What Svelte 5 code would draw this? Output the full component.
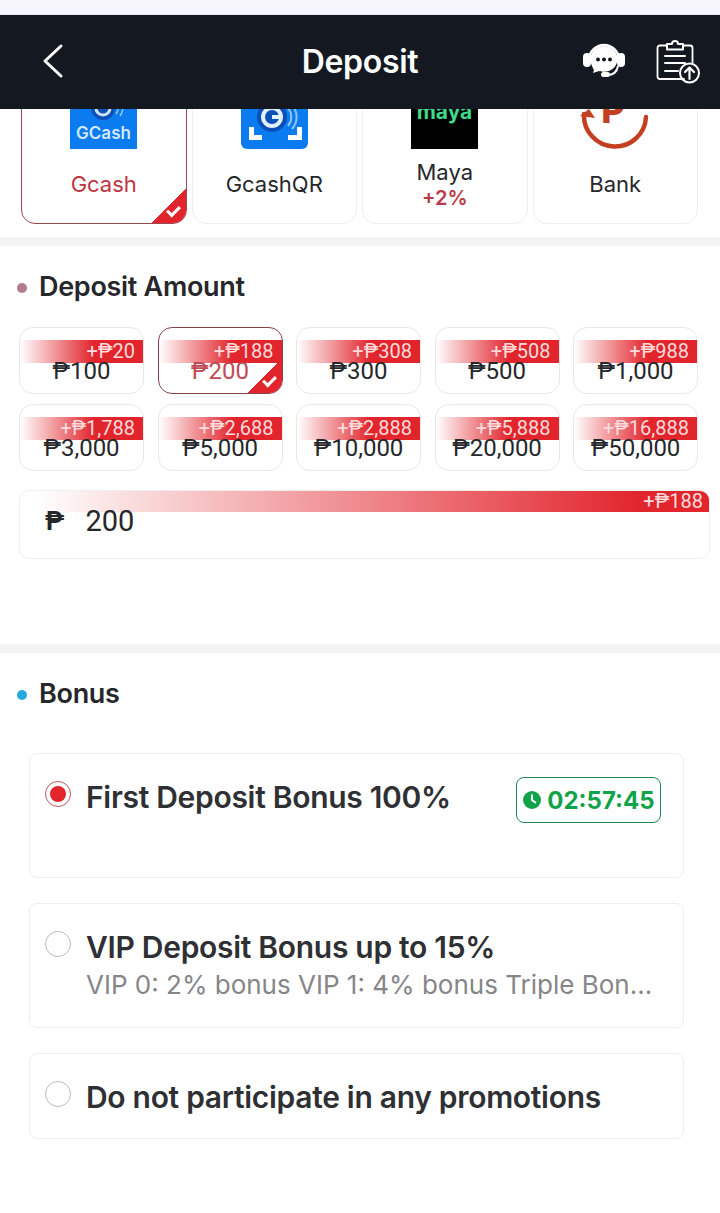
<script>
	const methods = [
		{ name: 'Gcash', logo: 'gcash', active: true },
		{ name: 'GcashQR', logo: 'qr' },
		{ name: 'Maya', logo: 'maya', extra: '+2%' },
		{ name: 'Bank', logo: 'bank' }
	];
	const amounts = [
		['100', '20'], ['200', '188'], ['300', '308'], ['500', '508'], ['1,000', '988'],
		['3,000', '1,788'], ['5,000', '2,688'], ['10,000', '2,888'], ['20,000', '5,888'], ['50,000', '16,888']
	];
	let selected = $state('200');
</script>

<div class="page">
	<div class="status"></div>
	<header class="nav">
		<svg class="back" viewBox="0 0 24 36" width="24" height="36" fill="none" stroke="#fff" stroke-width="3" stroke-linecap="round" stroke-linejoin="round">
			<path d="M20 3 L4 18 L20 33" />
		</svg>
		<h1>Deposit</h1>
		<svg class="support" viewBox="0 0 44 40" width="44" height="40">
			<path d="M7 20a15 15 0 0 1 30 0" fill="none" stroke="#fff" stroke-width="2.5" />
			<rect x="1" y="13" width="8" height="14" rx="4" fill="#fff" />
			<rect x="35" y="13" width="8" height="14" rx="4" fill="#fff" />
			<path d="M22 6c-8 0-13.500 6-13.500 13 0 5 2.500 9 3.500 11l-1 3 6-2c2 .6 3 .8 5 .8 8 0 13.500-6 13.500-12.800S30 6 22 6z" fill="#fff" />
			<circle cx="16" cy="19.500" r="2" fill="#141821" />
			<circle cx="22" cy="19.500" r="2" fill="#141821" />
			<circle cx="28" cy="19.500" r="2" fill="#141821" />
			<path d="M36 26c-1 6-5 9-11 9" fill="none" stroke="#fff" stroke-width="2" />
			<rect x="19" y="32" width="9" height="5" rx="2.500" fill="#fff" />
		</svg>
		<svg class="upload" viewBox="0 0 44 46" width="44" height="46" fill="none" stroke="#fff" stroke-width="1.800" stroke-linecap="round" stroke-linejoin="round">
			<path d="M28 41H4a2.500 2.500 0 0 1-2.500-2.500V10A2.500 2.500 0 0 1 4 7.500h7M27 7.500h7a2.500 2.500 0 0 1 2.500 2.500v16" />
			<path d="M11 11.500V6h5a3 3 0 0 1 6 0h5v5.500z" stroke-width="2" />
			<path d="M9 18h20M9 25h20M9 33h13" stroke-width="2" />
			<circle cx="33.500" cy="35" r="9.500" stroke-width="2" />
			<path d="M33.500 41V30M29 34l4.500-4.500L38 34" stroke-width="2.200" />
		</svg>
	</header>

	<div class="methods">
		{#each methods as m}
			<div class="method" class:active={m.active}>
				<div class="logo">
					{#if m.logo === 'gcash'}
						<svg viewBox="0 0 67 67" width="67" height="67">
							<rect width="67" height="67" fill="#0a7cf0" />
							<circle cx="33" cy="26" r="12" fill="#0b4fb8" />
							<circle cx="33" cy="26" r="7" fill="none" stroke="#cfe4fb" stroke-width="3" />
							<path d="M46 18a12 12 0 0 1 0 14M50 16a15 15 0 0 1 0 18" fill="none" stroke="#8fc3f7" stroke-width="1.500" />
							<text x="33.500" y="57" text-anchor="middle" class="gc">GCash</text>
						</svg>
					{:else if m.logo === 'qr'}
						<svg viewBox="0 0 67 67" width="67" height="67">
							<rect width="67" height="67" rx="6" fill="#0a7cf0" />
							<circle cx="31" cy="35" r="15" fill="#0b4fb8" />
							<circle cx="31" cy="35" r="9" fill="none" stroke="#e2effc" stroke-width="4" />
							<path d="M31 35h9" stroke="#e2effc" stroke-width="4" />
							<path d="M47 26a14 14 0 0 1 0 18M51 23a18 18 0 0 1 0 24" fill="none" stroke="#8fc3f7" stroke-width="2" />
							<path d="M8 45v13h13v-5h-8v-8zM61 45v13H47v-5h9v-8z" fill="#fff" />
						</svg>
					{:else if m.logo === 'maya'}
						<svg viewBox="0 0 67 67" width="67" height="67">
							<rect width="67" height="67" fill="#000" />
							<text x="33.500" y="37" text-anchor="middle" class="maya">maya</text>
						</svg>
					{:else}
						<svg viewBox="0 0 70 70" width="70" height="70">
							<path d="M4 35a31 31 0 0 0 62 3" fill="none" stroke="#c2401f" stroke-width="4.500" stroke-linecap="round" />
							<path d="M0 37l9-7 6 9z" fill="#c2401f" />
							<path d="M68 12L54 20l14 6z" fill="#c2401f" />
							<text x="33" y="44" text-anchor="middle" class="bank-p">P</text>
						</svg>
					{/if}
				</div>
				<div class="label">
					<span>{m.name}</span>
					{#if m.extra}<span class="extra">{m.extra}</span>{/if}
				</div>
				{#if m.active}
					<span class="tick big"></span>
				{/if}
			</div>
		{/each}
	</div>

	<div class="divider"></div>

	<section class="amount">
		<h2><i class="dot rose"></i>Deposit Amount</h2>
		<div class="grid">
			{#each amounts as [value, bonus]}
				<button class="chip" class:active={selected === value} onclick={() => (selected = value)}>
					<span class="ribbon">+₱{bonus}</span>
					<span class="value">₱{value}</span>
					{#if selected === value}<span class="tick"></span>{/if}
				</button>
			{/each}
		</div>
		<div class="field">
			<span class="ribbon wide">+₱188</span>
			<span class="peso">₱</span>
			<span class="entered">200</span>
		</div>
	</section>

	<div class="divider second"></div>

	<section class="bonus">
		<h2><i class="dot blue"></i>Bonus</h2>
		<div class="options">
			<div class="option first">
				<span class="radio on"></span>
				<div class="text"><div class="title">First Deposit Bonus 100%</div></div>
				<div class="timer">
					<svg viewBox="0 0 20 20" width="20" height="20">
						<circle cx="10" cy="10" r="9" fill="#10a34a" />
						<path d="M10 4.500V10l4 3" fill="none" stroke="#fff" stroke-width="2" />
					</svg>
					<span>02:57:45</span>
				</div>
			</div>
			<div class="option second-opt">
				<span class="radio"></span>
				<div class="text">
					<div class="title">VIP Deposit Bonus up to 15%</div>
					<div class="sub">VIP 0: 2% bonus VIP 1: 4% bonus Triple Bonus on deposit</div>
				</div>
			</div>
			<div class="option third">
				<span class="radio"></span>
				<div class="text"><div class="title">Do not participate in any promotions</div></div>
			</div>
		</div>
	</section>
</div>

<style>
	:global(body) {
		margin: 0;
		background: #fff;
	}
	.page {
		width: 720px;
		height: 1213px;
		overflow: hidden;
		background: #fff;
		font-family: Inter, 'Open Sans', sans-serif;
		color: #26272b;
	}
	.status {
		height: 14px;
		background: #f5f5fb;
		border-bottom: 1px solid #e8e8f2;
	}
	.nav {
		height: 94px;
		background: #141821;
		display: flex;
		align-items: center;
		position: relative;
		padding: 0 20px 0 41px;
	}
	.back {
		margin-top: -2px;
	}
	.nav h1 {
		position: absolute;
		left: 0;
		right: 0;
		margin: 0;
		text-align: center;
		color: #fff;
		font-size: 32px;
		font-weight: 600;
		letter-spacing: -0.3px;
		margin-top: -2px;
	}
	.support {
		margin-left: auto;
		margin-right: 30px;
		margin-top: -4px;
	}
	.upload {
		margin-top: -2px;
	}
	.methods {
		height: 128px;
		overflow: hidden;
		display: flex;
		align-items: flex-end;
		gap: 5px;
		padding: 0 22px 13px 21px;
		box-sizing: border-box;
	}
	.method {
		position: relative;
		flex: 1;
		height: 160px;
		box-sizing: border-box;
		border: 1px solid #eee;
		border-radius: 14px;
		overflow: hidden;
		display: flex;
		flex-direction: column;
		align-items: center;
	}
	.method.active {
		border-color: #9c4a52;
		color: #c0343f;
	}
	.logo {
		height: 84px;
		margin-top: 0;
		display: flex;
		align-items: flex-end;
	}
	.logo svg {
		display: block;
	}
	.gc {
		font: 600 17px Inter, sans-serif;
		fill: #d5e8fb;
	}
	.maya {
		font: 700 21px Inter, sans-serif;
		fill: #3fd98a;
	}
	.bank-p {
		font: 800 36px Inter, sans-serif;
		fill: #c2401f;
	}
	.label {
		flex: 1;
		display: flex;
		flex-direction: column;
		align-items: center;
		justify-content: center;
		font-size: 22px;
		line-height: 27px;
		padding-bottom: 3px;
	}
	.extra {
		color: #b93a48;
		font-size: 20px;
		font-weight: 600;
		line-height: 25px;
	}
	.tick {
		position: absolute;
		right: 0;
		bottom: 0;
		width: 35px;
		height: 34px;
		background: linear-gradient(135deg, transparent 50%, #e2242c 50%);
	}
	.tick::after {
		content: '';
		position: absolute;
		right: 6px;
		bottom: 9px;
		width: 10px;
		height: 5px;
		border-left: 3px solid #fff;
		border-bottom: 3px solid #fff;
		transform: rotate(-45deg);
	}
	.divider {
		height: 9px;
		background: #f3f3f3;
	}
	.divider.second {
		margin-top: 0;
	}
	h2 {
		margin: 0;
		display: flex;
		align-items: center;
		font-size: 27px;
		font-weight: 600;
		line-height: 34px;
		letter-spacing: -0.3px;
	}
	.dot {
		width: 10px;
		height: 10px;
		border-radius: 50%;
		margin-right: 12px;
		margin-top: 2px;
	}
	.rose {
		background: #b67a90;
	}
	.blue {
		background: #25a9e0;
	}
	.amount {
		height: 398px;
		box-sizing: border-box;
		padding: 24px 10px 0 17px;
	}
	.grid {
		display: grid;
		grid-template-columns: repeat(5, 125px);
		column-gap: 13.500px;
		row-gap: 10px;
		margin: 23px 0 0 2px;
	}
	.chip {
		position: relative;
		display: block;
		height: 67px;
		padding: 0;
		overflow: hidden;
		background: #fff;
		border: 1px solid #e8e8e8;
		border-radius: 14px;
		font-family: Roboto, 'DejaVu Sans', sans-serif;
		color: #26272b;
		cursor: pointer;
		text-align: center;
	}
	.chip.active {
		border-color: #8a4049;
		color: #bf4a55;
	}
	.ribbon {
		display: block;
		height: 23px;
		line-height: 23px;
		padding-right: 8px;
		box-sizing: border-box;
		text-align: right;
		font-family: Roboto, 'DejaVu Sans', sans-serif;
		font-size: 20px;
		color: #fbdcdc;
		background: linear-gradient(90deg, rgba(226, 36, 44, 0), #e2242c 60%);
	}
	.value {
		display: block;
		font-size: 24px;
		line-height: 20px;
		margin-top: -2px;
	}
	.field {
		position: relative;
		height: 69px;
		width: 691px;
		margin: 19px 0 0 2px;
		box-sizing: border-box;
		border: 1px solid #eee;
		border-radius: 10px;
		overflow: hidden;
		display: flex;
		align-items: flex-start;
		font-family: Roboto, 'DejaVu Sans', sans-serif;
	}
	.ribbon.wide {
		position: absolute;
		left: 15px;
		right: 0;
		top: 0;
		height: 21px;
		line-height: 20px;
		padding-right: 6px;
		background: linear-gradient(90deg, rgba(226, 36, 44, 0), #e2242c 90%);
	}
	.peso {
		position: relative;
		margin: 14px 0 0 25px;
		font-size: 26px;
		font-weight: 700;
		line-height: 32px;
	}
	.entered {
		position: relative;
		margin: 14px 0 0 21px;
		font-size: 29px;
		line-height: 32px;
	}
	.bonus {
		padding: 24px 0 0 17px;
	}
	.options {
		margin: 42px 0 0 12px;
		width: 655px;
		display: flex;
		flex-direction: column;
		gap: 25px;
	}
	.option {
		position: relative;
		box-sizing: border-box;
		border: 1px solid #eee;
		border-radius: 8px;
		display: flex;
		align-items: flex-start;
		padding: 24px 22px 0 15px;
	}
	.option.first {
		height: 125px;
	}
	.option.second-opt {
		height: 125px;
	}
	.option.third {
		height: 86px;
	}
	.radio {
		flex: none;
		width: 24px;
		height: 24px;
		border: 1px solid #bbb;
		border-radius: 50%;
		margin-top: 3px;
		margin-right: 15px;
		position: relative;
	}
	.radio.on {
		border-color: #b85a62;
	}
	.radio.on::after {
		content: '';
		position: absolute;
		inset: 4px;
		border-radius: 50%;
		background: #e2242c;
	}
	.text {
		flex: 1;
		min-width: 0;
	}
	.title {
		font-size: 30px;
		font-weight: 600;
		line-height: 38px;
		letter-spacing: -0.3px;
		white-space: nowrap;
		color: #2f3034;
	}
	.sub {
		font-size: 26px;
		line-height: 38px;
		color: #85868a;
		white-space: nowrap;
		overflow: hidden;
		text-overflow: ellipsis;
	}
	.timer {
		position: absolute;
		right: 22px;
		top: 23px;
		width: 145px;
		height: 46px;
		box-sizing: border-box;
		border: 1px solid #1f8a55;
		border-radius: 8px;
		display: flex;
		align-items: center;
		justify-content: center;
		gap: 5px;
		color: #10a34a;
		font-size: 24px;
		font-weight: 700;
	}
</style>
